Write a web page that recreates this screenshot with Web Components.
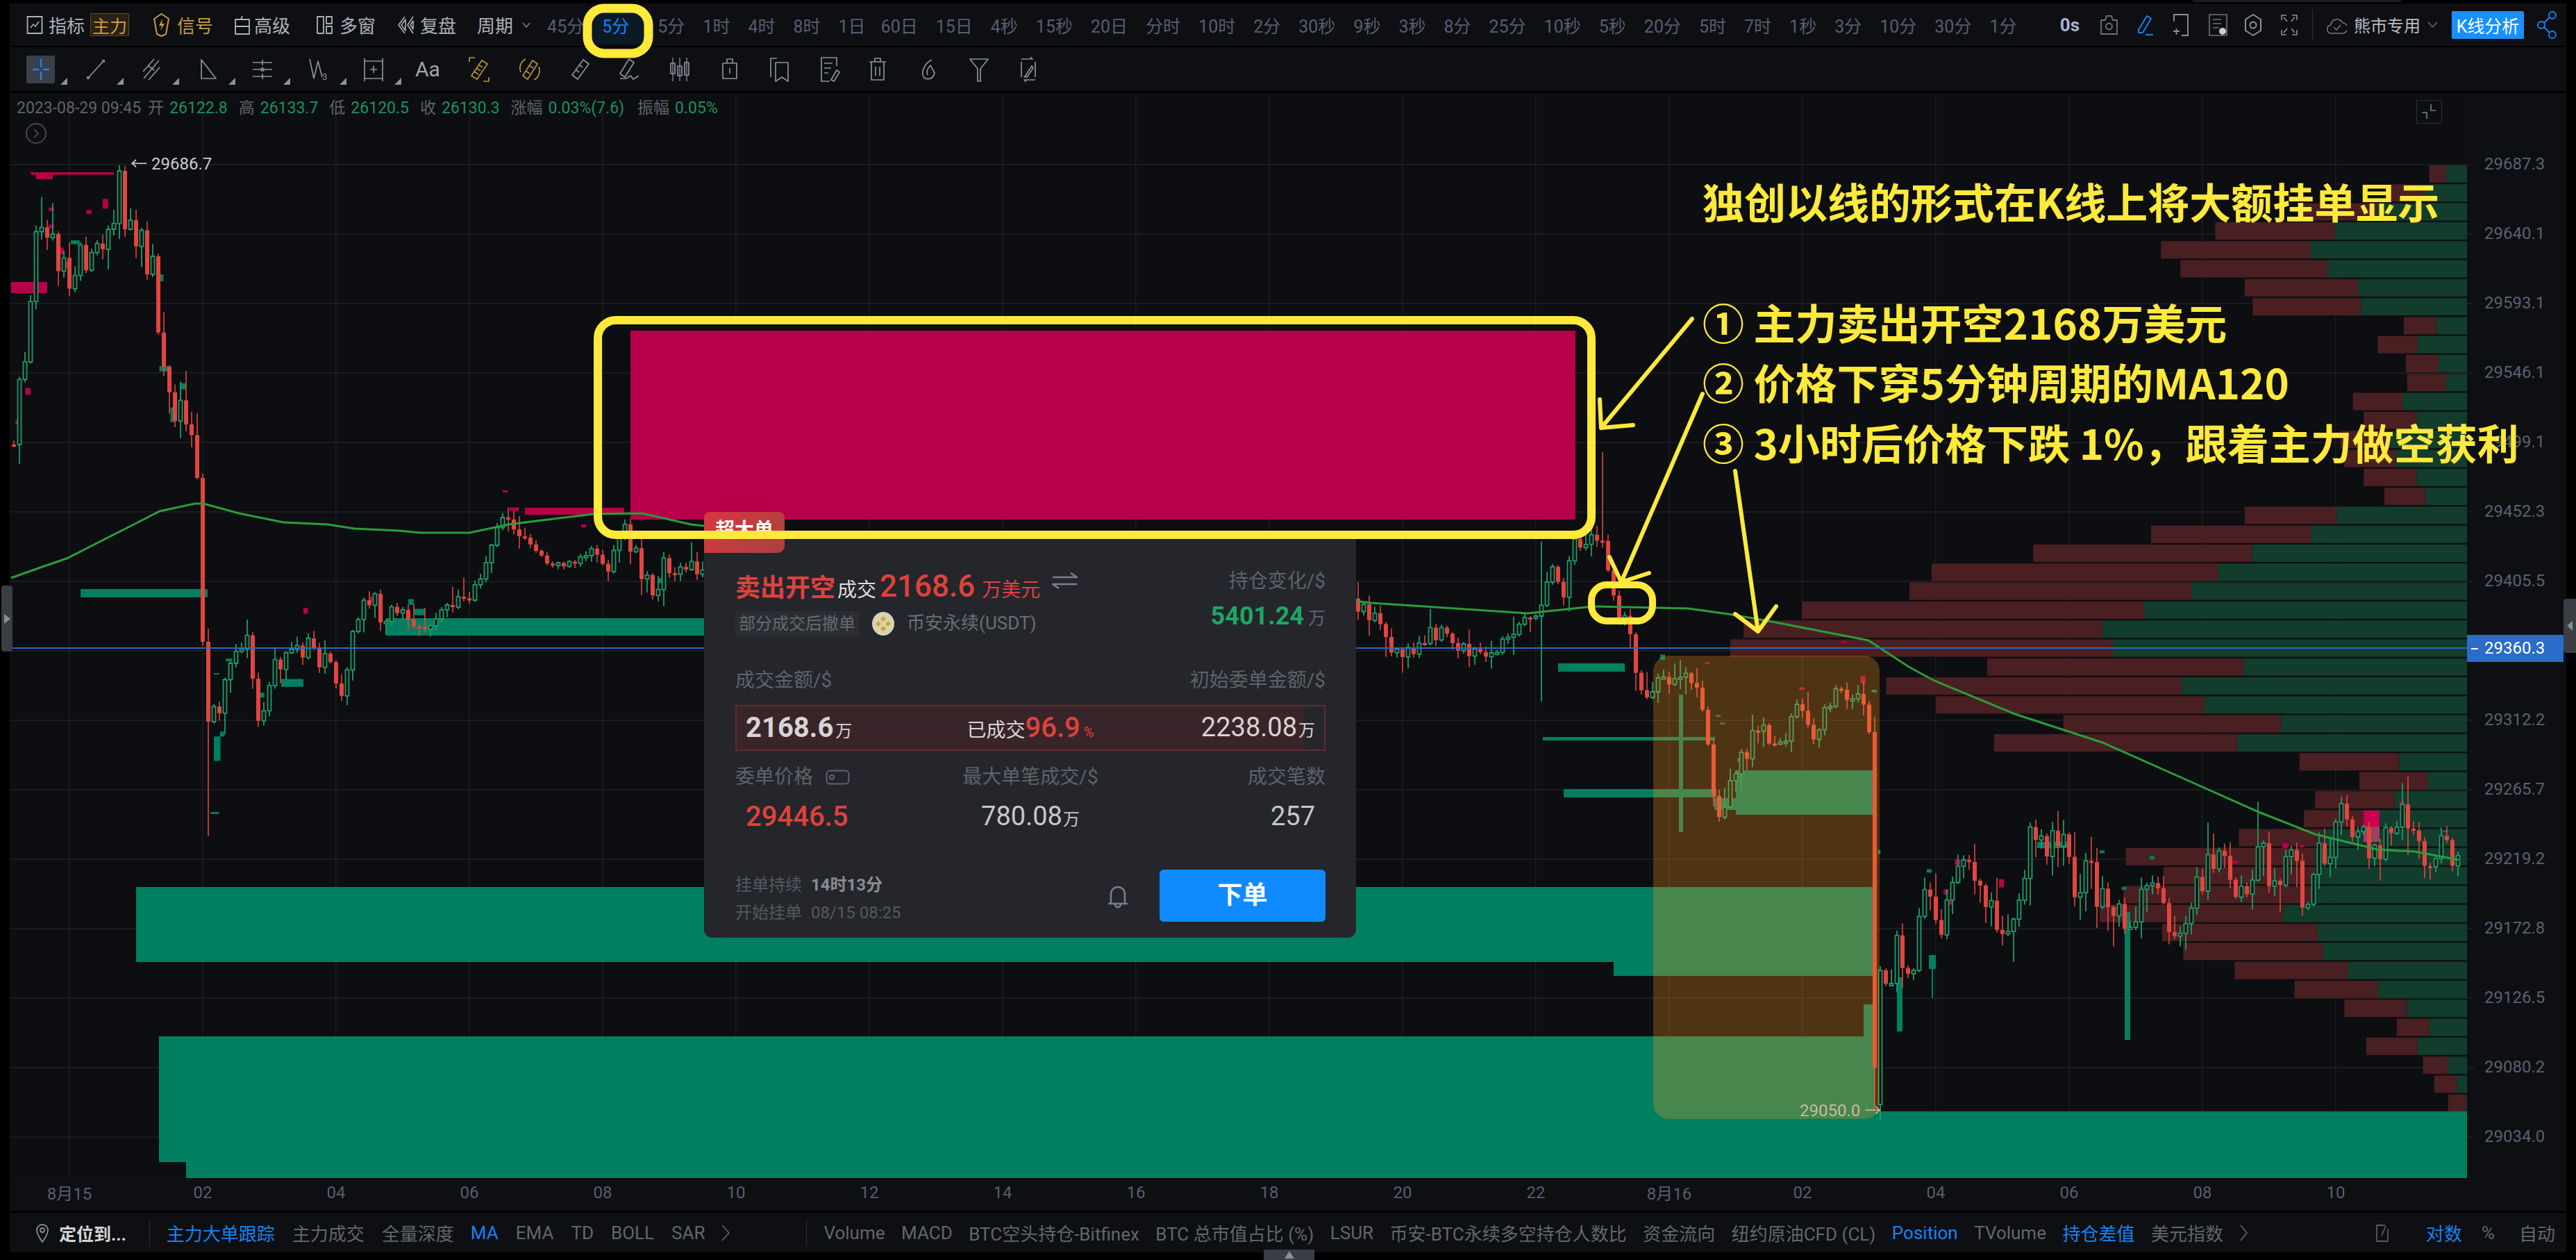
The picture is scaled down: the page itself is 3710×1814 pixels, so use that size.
<!DOCTYPE html>
<html lang="zh"><head><meta charset="utf-8"><title>K线</title>
<style>
html,body{margin:0;padding:0;background:#000;width:3710px;height:1814px;overflow:hidden}
body{position:relative;font-family:Roboto,"Noto Sans CJK SC",sans-serif}
</style></head><body>
<kline-app></kline-app>
<annotation-layer></annotation-layer>
<script>
const FONT='Roboto,"Noto Sans CJK SC",sans-serif';
function def(name,render){customElements.define(name,class extends HTMLElement{constructor(){super();this.attachShadow({mode:'open'}).innerHTML=render(this)}})}
function ico(w,h,vb,body,col,sw,extra){return `<svg width="${w}" height="${h}" viewBox="${vb}" fill="none" stroke="${col}" stroke-width="${sw||1.8}" stroke-linejoin="round" style="flex:none;${extra||''}">${body}</svg>`}

def('bar-item',()=>`<style>:host{display:inline-flex;align-items:center;white-space:nowrap;flex:none}</style><slot></slot>`);
def('period-item',(el)=>`<style>:host{display:inline-flex;align-items:center;justify-content:center;height:54px;padding:0 13px;font-size:25px;color:#565d72;white-space:nowrap;flex:none;box-sizing:border-box}
:host([active]){color:#1583f3;background:#0c1a27;padding-right:21px;margin-right:7px;border-radius:4px}</style><slot></slot>`);

def('top-bar',()=>{
 const periods=['45分','5分*','5分','1时','4时','8时','1日','60日','15日','4秒','15秒','20日','分时','10时','2分','30秒','9秒','3秒','8分','25分','10秒','5秒','20分','5时','7时','1秒','3分','10分','30分','1分'];
 const G='#aeb2ba',Y='#c49b45';
 return `<style>:host{display:flex;align-items:center;height:61px;background:#0d0f12;padding:0 14px 0 24px;box-sizing:border-box;font-size:26px;color:${G}}
 .tag{width:56px;height:33px;box-sizing:border-box;border:1px solid #5e4826;background:#2a2116;color:#d49a3c;justify-content:center;font-size:25px}
 .r{margin-left:auto;display:flex;align-items:center}
 .btn{width:104px;height:40px;background:#1890ff;color:#fff;justify-content:center;border-radius:2px;font-size:25px}
 .div{width:1px;height:44px;background:#2c2f35;flex:none}
 </style>
 ${ico(24,30,'0 0 24 30','<rect x="1.5" y="3" width="21" height="24"/><path d="M6 19l4-5 3 3 5-7" stroke-width="1.5"/>',G)}
 <bar-item style="margin-left:8px">指标</bar-item>
 <bar-item class="tag" style="margin-left:8px">主力</bar-item>
 ${ico(25,36,'0 0 25 36','<path d="M12.5 2 23 9 19 31 12.5 34 6 31 2 9Z"/><path d="M14 9 9 19h4l-2 7 6-10h-4z" fill="'+Y+'" stroke="none"/>',Y,2,'margin-left:34px')}
 <bar-item style="margin-left:10px;color:${Y}">信号</bar-item>
 ${ico(26,30,'0 0 26 30','<path d="M3 7H23V28H3Z M3 17H23 M11 7 13 2"/>',G,1.8,'margin-left:29px')}
 <bar-item style="margin-left:4px">高级</bar-item>
 ${ico(23,28,'0 0 23 28','<rect x="1" y="2" width="9" height="24"/><rect x="14" y="2" width="8" height="10"/><rect x="14" y="16" width="8" height="10"/>',G,1.8,'margin-left:38px')}
 <bar-item style="margin-left:10px">多窗</bar-item>
 ${ico(26,30,'0 0 26 30','<path d="M12 3 3 15 12 27 M13 7 7 15 13 23 Z M24 3 16 15 24 27 M24 9 20 15 24 21Z"/>',G,1.6,'margin-left:30px')}
 <bar-item style="margin-left:8px">复盘</bar-item>
 <bar-item style="margin-left:30px">周期</bar-item>
 ${ico(12,8,'0 0 12 8','<path d="M1 1l5 6 5-6"/>','#7a7e86',1.6,'margin-left:13px;margin-right:11px')}
 ${periods.map((p,i)=>{const a=p.endsWith('*');return `<period-item ${a?'active':''} ${p==='1日'?'style="margin-right:-4px"':''}>${p.replace('*','')}</period-item>`}).join('')}
 <div class="r">
 <bar-item style="font-weight:700;color:#a7b6d6">0s</bar-item>
 ${ico(27,32,'0 0 27 32','<path d="M2 9H8L10 3H17L19 9H25V29H2Z"/><circle cx="13.5" cy="18" r="4.5"/>','#6e727a',1.8,'margin-left:29px')}
 ${ico(25,32,'0 0 25 32','<path d="M3 23 15 3l6 4L9 27H3Z M13 30H24" />','#1583f3',2,'margin-left:26px')}
 ${ico(25,34,'0 0 25 34','<path d="M3 12V2H23V32H14 M2 26H11 M6.500 22V31"/>','#8e9299',1.8,'margin-left:26px')}
 ${ico(27,34,'0 0 27 34','<rect x="1" y="2" width="25" height="30"/><circle cx="20" cy="26" r="5" fill="#cfcfcf" stroke="none"/><path d="M6 9H18M6 15H18M6 21H15" stroke-width="1.4"/>','#6e727a',1.6,'margin-left:28px')}
 ${ico(26,34,'0 0 26 34','<path d="M13 2 24 9V25L13 32 2 25V9Z"/><circle cx="13" cy="17" r="4.500"/>','#8e9299',2,'margin-left:24px')}
 ${ico(26,32,'0 0 26 32','<path d="M2 9V2H9M17 2H24V9M2 23V30H9M17 30H24V23M5 5l5 6M21 5l-5 6M5 27l5-6M21 27l-5-6" />','#8e9299',1.6,'margin-left:26px')}
 <div class="div" style="margin-left:20px"></div>
 ${ico(29,30,'0 0 29 30','<path d="M7 27a6 6 0 0 1-1-12A9 9 0 0 1 23 12a7 7 0 0 1-1 15Z"/><path d="M10 18l4 4 6-7"/>','#71757d',1.6,'margin-left:20px')}
 <bar-item style="margin-left:10px;font-size:24px;color:#b8bcc4">熊市专用</bar-item>
 ${ico(15,9,'0 0 15 9','<path d="M1 1l6.500 7L14 1"/>','#666a72',1.6,'margin-left:10px')}
 <bar-item class="btn" style="margin-left:20px">K线分析</bar-item>
 ${ico(28,40,'0 0 28 40','<circle cx="22" cy="6" r="5"/><circle cx="6" cy="20" r="5"/><circle cx="22" cy="34" r="5"/><path d="M18 9 10 17M10 23l8 8"/>','#1583f3',2,'margin-left:19px')}
 </div>`;
});

def('draw-toolbar',()=>{
 const g='#8d929b',Y='#b8923f';
 const P=(b,c)=>ico(32,38,'0 0 32 38',b,c||g,1.7);
 const icons=[
 ['<path d="M16 4V16M16 22V34M4 19H13M19 19H28" stroke="#1a86f0" stroke-width="2.4"/>',1,84,1],
 [P('<path d="M6 30 26 8"/><circle cx="5" cy="31" r="1.500"/><circle cx="27" cy="7" r="1.500"/>'),1,80],
 [P('<path d="M4 22 20 4M12 34 28 16M5 32 27 6M12 14l8 6"/>'),1,81],
 [P('<path d="M7 5V32H28Z"/>'),1,79],
 [P('<path d="M2 9H30M2 19H30M2 29H30M16 5V13M16 25V33" /><circle cx="16" cy="19" r="2"/>'),1,81],
 [P('<path d="M3 4 9 32 15 7 21 30"/><text x="21" y="34" font-size="13" stroke="none" fill="'+g+'" font-family="Roboto">3</text>'),1,79],
 [P('<rect x="3" y="7" width="26" height="25"/><path d="M11 19H21M16 14V24M3 3V7M29 3V7M3 32V36M29 32V36"/>'),1,76],
 ['<span style="font-size:30px;color:#a0a4ac;line-height:38px;font-family:Roboto">Aa</span>',0,76],
 [P('<path d="M2 8V2H10M30 30V36H22"/><path d="M20 6 28 11 13 33 5 28Z M15 12l6 4M12 17l6 4M9 22l6 4"/>',Y),0,73],
 [P('<path d="M20 6 27 11 13 33 6 28Z M15 13l6 4M10 21l6 4"/><path d="M10 4A15 15 0 0 0 3 23M22 34A15 15 0 0 0 29 15"/>',Y),0,72],
 [P('<path d="M21 5 29 11 13 33 5 27Z M16 13l4 3M11 20l4 3"/>'),0,71],
 [P('<path d="M16 4 23 9 10 30 3 25Z M3 32H12L18 28 22 33 30 28"/>'),0,73],
 [P('<path d="M6 2V36M16 2V36M26 2V36" stroke-width="1.300"/><rect x="3" y="10" width="6" height="15"/><rect x="13" y="14" width="6" height="14"/><rect x="23" y="9" width="6" height="18"/>'),0,72],
 [P('<path d="M12 10V4H20V10M6 10H26V32H6Z M16 17V25"/>'),0,72],
 [P('<path d="M3 30V3H12M10 9H28V36L19 30 10 36Z"/>'),0,72],
 [P('<path d="M26 14V2H4V36H16M8 10H20M8 17H18M8 24H14M18 34 26 20 30 23 22 36Z"/>'),0,69],
 [P('<path d="M4 8H28M12 8V3H20V8M7 8V34H25V8M13 15V28M19 15V28"/>'),0,72],
 [P('<path d="M22 5C12 10 8 20 9 27 10 35 24 35 26 24L20 13C15 18 14 24 16 27"/>'),0,74],
 [P('<path d="M3 4H29L18 18V36H14V18Z"/>'),0,71],
 [P('<path d="M6 8V30M26 8V30M6 4H22L19 1M26 34H10L13 37M21 14 12 28 10 30 14 30 23 17Z"/>'),0,72]];
 return `<style>:host{display:flex;align-items:center;height:63px;background:#0d0f12;padding:0 0 0 24px;box-sizing:border-box}
 .s{display:flex;align-items:center;position:relative;flex:none;height:38px}
 .t{position:absolute;bottom:-3px;width:0;height:0;border-left:10px solid transparent;border-bottom:10px solid #8d929b}
 .box{width:41px;height:40px;background:#3a3f4a;border-radius:2px;display:flex;align-items:center;justify-content:center}
 </style>`+icons.map(([b,t,w,box],i)=>`<div class="s" style="width:${w}px">${box?`<div class="box">${ico(32,38,'0 0 32 38',b,'#1a86f0')}</div>`:b}${t?`<i class="t" style="left:${i==0?49:46}px"></i>`:''}</div>`).join('');
});

def('price-axis',()=>{
 const L=['29687.3','29640.1','29593.1','29546.1','29499.1','29452.3','29405.5','*29360.3','29312.2','29265.7','29219.2','29172.8','29126.5','29080.2','29034.0'];
 return `<style>:host{display:block;width:143px;flex:none;background:#0d0f12;padding-top:52px;box-sizing:border-box;font-size:24px;color:#5b6072}
 .c{height:100px;display:flex;align-items:center;padding-left:25px;box-sizing:border-box}
 .cur{height:100px;display:flex;align-items:center}
 .b{width:139px;height:39px;margin-top:-6px;background:#2a6cc8;color:#fff;display:flex;align-items:center;box-sizing:border-box;padding-left:25px;position:relative}
 .b i{position:absolute;left:6px;top:19px;width:10px;height:2px;background:#fff}
 </style>`+L.map(x=>x[0]=='*'?`<div class="cur"><div class="b"><i></i>${x.slice(1)}</div></div>`:`<div class="c">${x}</div>`).join('');
});

def('order-popup',()=>{
 const lab='#5e626b';
 return `<style>:host{position:absolute;left:1000px;top:642px;width:939px;height:574px;background:#24262b;border-radius:0 0 12px 12px;padding:42px 44px 0 45px;box-sizing:border-box;color:${lab};font-size:28px;line-height:1.2;white-space:nowrap}
 .flag{position:absolute;left:0;top:-39px;width:116px;height:59px;border-radius:8px 8px 10px 0;background:linear-gradient(135deg,#d9363f,#a8423f);color:#fff;font-weight:700;font-size:28px;text-align:center;line-height:54px}
 .h{display:flex;justify-content:space-between}
 .row{display:flex;align-items:baseline;height:44px}
 .red{color:#e0413d}
 .badge{display:inline-flex;align-items:center;justify-content:center;width:178px;height:36px;background:#2b2d33;font-size:24px;color:#666a72}
 .sub{display:flex;align-items:center;height:36px;margin-top:18px;font-size:26px;color:#6a6e76}
 .rt{text-align:right}
 .between{display:flex;justify-content:space-between;align-items:center;height:34px;margin-top:47px}
 .bar{margin-top:18px;height:66px;border:2px solid #652a2e;box-sizing:border-box;background:linear-gradient(to right,#38252a 96.7%,transparent 96.7%);display:grid;grid-template-columns:1fr 1fr 1fr;align-items:center;padding:0 13px;color:#d8d4d4}
 .g3{display:grid;grid-template-columns:1fr 1.05fr 1fr;height:34px;align-items:center;margin-top:21px;text-align:center}
 .v3{display:grid;grid-template-columns:1fr 1.05fr 1fr;height:44px;align-items:center;margin-top:16px;text-align:center;padding:0 15px;color:#c8c8c8;font-size:38px}
 .w{font-size:24px}
 .foot{display:flex;align-items:flex-start;margin-top:56px}
 .btn{margin-left:44px;width:239px;height:75px;background:#0f8bff;border-radius:6px;color:#fff;font-weight:700;font-size:36px;display:flex;align-items:center;justify-content:center}
 .fl{flex:1;font-size:24px;color:#55585f;padding-top:2px}
 .fl div{height:40px;display:flex;align-items:center;gap:13px}
 </style>
 <div class="flag">超大单</div>
 <div class="h">
  <div>
   <div class="row"><span class="red" style="font-size:36px;font-weight:700">卖出开空</span><span style="color:#ddd;margin-left:3px">成交</span><span class="red" style="font-size:44px;font-weight:500;margin-left:5px">2168.6</span><span class="red" style="margin-left:10px">万美元</span>
   <span style="margin-left:17px;align-self:center">${ico(37,26,'0 0 37 26','<path d="M1 8H36L27 2M36 18H1L10 24"/>','#7b7f87',2.5)}</span></div>
   <div class="sub"><span class="badge">部分成交后撤单</span>
    <svg width="32" height="34" viewBox="0 0 32 34" style="margin:0 18px 0 19px;flex:none"><ellipse cx="16" cy="17" rx="16" ry="17" fill="#d8d2b8"/><path d="M16 6l4 4-4 4-4-4zM9 13l4 4-4 4-4-4zM23 13l4 4-4 4-4-4zM16 20l4 4-4 4-4-4z" fill="#d9a520"/></svg>
    <span>币安永续(USDT)</span></div>
  </div>
  <div class="rt">
   <div style="height:30px;line-height:30px;margin-top:4px">持仓变化/$</div>
   <div style="margin-top:16px;height:38px;line-height:38px"><span style="color:#1fa567;font-size:36px;font-weight:700">5401.24</span><span style="font-size:25px;margin-left:6px">万</span></div>
  </div>
 </div>
 <div class="between"><span>成交金额/$</span><span>初始委单金额/$</span></div>
 <div class="bar"><div style="font-size:40px;font-weight:700">2168.6<span class="w" style="font-weight:400;margin-left:3px">万</span></div>
  <div style="text-align:center;font-size:28px">已成交<span class="red" style="font-size:40px;font-weight:500">96.9</span><span class="red" style="font-size:20px;margin-left:5px">%</span></div>
  <div style="text-align:right;font-size:38px">2238.08<span class="w" style="margin-left:2px">万</span></div></div>
 <div class="g3"><span style="text-align:left;display:flex;align-items:center">委单价格${ico(35,22,'0 0 35 22','<rect x="1.500" y="1.500" width="32" height="19" rx="5"/><circle cx="9" cy="11" r="3"/>','#5e626b',2,'margin-left:18px')}</span><span>最大单笔成交/$</span><span style="text-align:right">成交笔数</span></div>
 <div class="v3"><span class="red" style="text-align:left;font-size:40px;font-weight:500">29446.5</span><span>780.08<span class="w" style="margin-left:1px">万</span></span><span style="text-align:right">257</span></div>
 <div class="foot">
  <div class="fl"><div>挂单持续<b style="color:#8a8d94;font-weight:700">14时13分</b></div><div>开始挂单<span>08/15 08:25</span></div></div>
  ${ico(32,36,'0 0 32 36','<path d="M2 28H30M6 28V14A10 10 0 0 1 26 14V28M12 28C12 35 20 35 20 28"/>','#7b7f87',2.6,'margin-top:21px')}
  <div class="btn">下单</div>
 </div>`;
});

def('chart-pane',()=>{
 const W=[[20,640],[38,506],[48,352],[76,337],[102,422],[115,352],[134,365],[156,330],[172,246],[180,330],[198,358],[220,369],[230,506],[245,569],[274,611],[284,688],[292,924],[300,1039],[312,1032],[332,955],[357,913],[373,1046],[389,983],[415,934],[469,941],[488,1011],[510,899],[529,871],[580,878],[612,906],[644,871],[676,864],[701,808],[724,745],[752,766],[791,815],[829,811],[855,787],[874,829],[899,752],[938,864],[957,800],[988,820],[1200,800],[1600,820],[1964,870],[2011,935],[2082,911],[2141,946],[2212,887],[2236,816],[2248,873],[2267,776],[2296,771],[2310,780],[2325,863],[2344,914],[2372,1004],[2426,965],[2453,1024],[2475,1179],[2502,1109],[2534,1049],[2565,1069],[2588,1014],[2610,1069],[2646,987],[2678,1000],[2692,1054],[2700,1537],[2708,1397],[2736,1373],[2750,1407],[2777,1278],[2790,1333],[2830,1233],[2866,1293],[2893,1343],[2920,1223],[2965,1218],[2992,1288],[3001,1233],[3037,1308],[3073,1338],[3091,1273],[3127,1348],[3172,1283],[3199,1218],[3235,1293],[3249,1213],[3276,1268],[3307,1233],[3321,1318],[3334,1248],[3366,1179],[3397,1198],[3415,1243],[3437,1189],[3469,1193],[3500,1248],[3523,1208],[3541,1233]];
 const yAt=x=>{for(let i=1;i<W.length;i++){if(x<=W[i][0]){const[a,b]=W[i-1],[c,d]=W[i];return b+(d-b)*(x-a)/(c-a)}}return W[W.length-1][1]};
 let s=12345;const R=()=>{s=(s*16807)%2147483647;return s/2147483647};
 const amp=x=>x<300?70:x<560?46:x<760?22:x<860?8:x<1000?46:x<2700?34:70;
 const BG='#0c0e11',GR='#1a1c20';
 let o='';
 for(let i=0;i<15;i++){o+=`<rect x="14" y="${236+100*i}" width="3549" height="2" fill="${GR}"/>`}
 for(let x=99;x<3553;x+=192){o+=`<rect x="${x}" y="134" width="1.500" height="1562" fill="${GR}"/>`}
 const z8=x=>x/1.038+2200,z10=x=>x/1.112+2300;
 const A=[[1348,1373],[1290,1340],[1160,1270],[1028,1207],[947,1171],[976,1196],[1072,1242],[1084,1246],[1310,1358],[1271,1331],[1313,1362],[1315,1373],[1234,1308],[1250,1330],[1215,1290],[1221,1298],[1250,1329],[1281,1342],[1072,1210],[932,1171],[756,1083],[604,1032],[571,993],[410,922],[323,859],[303,875],[687,1070],[536,978]].map(r=>r.map(z8));
 const B=[[543,973],[747,1096],[636,1025],[1125,1285],[1221,1330],[1150,1277],[1132,1240],[1028,1160],[847,1150],[907,1150],[843,1150],[805,1099],[905,1154],[939,1163],[1021,1203],[1117,1251],[1197,1297],[1281,1333],[1232,1314],[1323,1363],[1341,1377],[1363,1392]].map(r=>r.map(z10));
 A.concat(B).forEach((r,i)=>{const y=(238+27.3*i).toFixed(1);o+=`<rect x="${r[0].toFixed(1)}" y="${y}" width="${(r[1]-r[0]).toFixed(1)}" height="25" fill="#4a1f22"/><rect x="${r[1].toFixed(1)}" y="${y}" width="${(3553-r[1]).toFixed(1)}" height="25" fill="#123c2c"/>`});
 const T='#008060',P='#b8004a';
 const rect=(x,y,w,h,c)=>`<rect x="${x}" y="${y}" width="${w}" height="${h}" fill="${c}"/>`;
 o+=rect(908,476,1361,272,P)+rect(756,731,143,10,P)+rect(44,248,120,3.500,P)+rect(52,251,24,7,P)+rect(16,406,52,16,P);
 o+=rect(116,848,183,12,T)+rect(556,890,470,25,T);
 o+=rect(196,1277,2504,108,T)+rect(2324,1385,376,20,T);
 o+=rect(229,1492,2471,181,T)+rect(268,1673,2432,23,T)+rect(2684,1446,16,46,T)+rect(2700,1600,853,96,T);
 o+=rect(2500,1109,200,64,T)+rect(2469,1149,31,17,T)+rect(2222,1061,248,5,T)+rect(2252,1136,220,12,T)+rect(2418,1000,6,198,T);
 o+=rect(2244,955,96,12,T)+rect(3060,1313,8,184,T)+rect(2732,1407,8,78,T)+rect(2778,1375,10,20,T)+rect(2782,1395,2,42,T)+rect(2934,1212,45,9,T);
 o+=rect(3404,1167,23,23,'#c8004f')+rect(3404,1190,23,22,'#a04060');
 const z9p=[[110,255,12,7],[110,290,12,7],[132,337,12,14],[145,366,12,13],[195,260,12,8],[232,237,12,20],[57,625,12,14],[35,690,8,10],[685,1076,10,12],[835,1053,12,10],[1135,835,12,4],[1150,870,22,7],[1312,905,12,6]];
 const z9t=[[357,392,12,14],[408,615,12,13],[360,580,20,11],[385,665,10,30],[483,1340,15,50],[585,1250,12,10],[635,1222,50,16],[935,1078,24,13],[922,1058,12,12],[1488,1015,10,10],[160,322,20,8],[510,1180,14,6],[483,1210,12,3],[475,1495,20,4],[497,1330,10,10]];
 z9p.forEach(a=>o+=rect(a[0]/1.568,a[1]/1.425+120,a[2]/1.568,a[3]/1.425,P));
 z9t.forEach(a=>o+=rect(a[0]/1.568,a[1]/1.425+120,a[2]/1.568,a[3]/1.425,T));
 const z10p=[[392,47,8,5],[173,107,7,5],[324,180,8,7],[422,148,8,20],[573,678,9,16],[644,735,8,24],[555,765,8,14],[560,795,8,14],[1098,630,9,15],[1125,637,8,6],[1018,682,8,8],[1285,510,8,14]];
 const z10t=[[528,706,8,10],[805,652,8,8],[885,668,8,10],[840,758,8,8],[190,260,8,5],[440,187,8,8],[197,282,8,5],[101,85,8,15],[225,385,8,10],[450,650,4,12],[1355,595,8,4]];
 z10p.forEach(a=>o+=rect(z10(a[0]),a[1]/2.01+900,a[2]/1.112,a[3]/2.01,P));
 z10t.forEach(a=>o+=rect(z10(a[0]),a[1]/2.01+900,a[2]/1.112,a[3]/2.01,T));
 const over={300:{lo:1204},292:{lo:930},2700:{lo:1600},2708:{o:1590,c:1397},3252:{hi:1154},2308:{hi:651},2220:{hi:780,lo:1010},2420:{hi:950}};
 let up='',dn='',prev=yAt(20);
 for(let x=20;x<=3541;x+=8){
  const key=W.some(w=>Math.abs(w[0]-x)<4);
  let c=yAt(x)+(key?0:(R()-.5)*amp(x));
  let op=prev;const ov=over[x]||{};
  if(ov.o)op=ov.o;if(ov.c)c=ov.c;
  const wk=(x<300||x>2700)?48:(x>760&&x<860?10:30);
  const bigR=R()*R()*wk,bigL=R()*R()*wk;
  const t=Math.min(op,c),b=Math.max(op,c);
  const hi=ov.hi||t-bigR-2,lo=ov.lo||b+bigL+2;
  const h=Math.max(b-t,3);
  if(c<op){up+=`M${x} ${hi.toFixed(1)}V${t.toFixed(1)}M${x} ${(t+h).toFixed(1)}V${lo.toFixed(1)}M${x-2.500} ${t.toFixed(1)}h5v${h.toFixed(1)}h-5z`}
  else{dn+=`<rect x="${x-3}" y="${t.toFixed(1)}" width="6" height="${h.toFixed(1)}"/><rect x="${x-.8}" y="${hi.toFixed(1)}" width="1.6" height="${(lo-hi).toFixed(1)}"/>`}
  prev=c;
 }
 o+=`<g fill="#e2453f">${dn}</g><path d="${up}" fill="${BG}" stroke="#1d9d6b" stroke-width="1.800"/>`;
 const M=[[16,832],[64,815],[96,804],[179,762],[230,736],[281,725],[293,725],[344,739],[408,752],[472,755],[510,761],[574,764],[606,767],[676,767],[733,755],[797,747],[855,740],[925,739],[995,755],[1400,800],[1975,868],[2200,883],[2296,873],[2431,876],[2489,884],[2547,894],[2691,922],[2749,960],[2786,980],[2902,1028],[3028,1069],[3145,1121],[3253,1169],[3334,1201],[3424,1223],[3478,1226],[3541,1238]];
 o+=`<polyline points="${M.map(p=>p.join(',')).join(' ')}" fill="none" stroke="#2a9d3c" stroke-width="3"/>`;
 o+=rect(14,932,3539,2,'#2a6cc0');
 o+=`<rect x="2381" y="944" width="326" height="667" rx="22" fill="rgb(255,150,30)" fill-opacity=".28"/>`;
 return `<style>:host{display:flex;height:1562px;background:${BG};position:relative;color:#aaa}
 .plot{flex:1;position:relative;min-width:0}
 svg.c{position:absolute;left:0;top:0;display:block;overflow:visible}
 .info{position:absolute;left:10px;top:8px;font-size:23px;line-height:27px;display:flex;white-space:nowrap;color:#5f636c}
 .info b{font-weight:400;color:#1a9160;margin-left:8px}
 .info span{margin-left:16px}
 .circ{position:absolute;left:23px;top:43px;width:30px;height:30px;box-sizing:border-box;border:2px solid #43464c;border-radius:50%;display:flex;align-items:center;justify-content:center}
 .ext{position:absolute;font-size:24px;white-space:nowrap;line-height:28px}
 .cor{position:absolute;left:3466px;top:10px;width:37px;height:34px;box-sizing:border-box;border:1.500px solid #2a2e48}
 </style>
 <div class="plot">
  <svg class="c" width="3539" height="1562" viewBox="14 134 3539 1562">${o}</svg>
  <div class="info"><i style="font-style:normal">2023-08-29 09:45</i><span style="margin-left:10px">开<b>26122.8</b></span><span>高<b>26133.7</b></span><span>低<b>26120.5</b></span><span>收<b>26130.3</b></span><span>涨幅<b>0.03%(7.6)</b></span><span style="margin-left:19px">振幅<b>0.05%</b></span></div>
  <div class="circ">${ico(10,16,'0 0 10 16','<path d="M2 2l6 6-6 6"/>','#43464c',2)}</div>
  <div class="ext" style="left:174px;top:88px;color:#c8ccd0">← 29686.7</div>
  <div class="ext" style="left:2578px;top:1451px;color:#c9bb9d">29050.0 →</div>
  <div class="cor">${ico(34,31,'0 0 34 31','<path d="M20 5V14H27M7 17H14V26" />','#7a7e8a',1.6)}</div>
  <order-popup></order-popup>
 </div>
 <price-axis></price-axis>`;
});

def('time-axis',()=>{
 const L=['8月15','02','04','06','08','10','12','14','16','18','20','22','8月16','02','04','06','08','10'];
 return `<style>:host{display:flex;height:47px;background:#0d0f12;font-size:24px;color:#565d72;align-items:center;padding-bottom:6px;box-sizing:border-box}
 div{width:192px;flex:none;text-align:center;white-space:nowrap}</style>`+L.map((t,i)=>`<div style="${i==0?'width:172px;margin-right:10px':''}">${t}</div>`).join('');
});

def('bottom-bar',()=>{
 const B='#1583f3',G='#62666e';
 const it=(t,c,m)=>`<bar-item style="margin-left:${m==null?25:m}px;${c?'color:'+c:''}">${t}</bar-item>`;
 const r=(t,c)=>it(t,c,23.5);
 return `<style>:host{display:flex;align-items:center;height:57px;background:#0d0f12;padding:0 16px 0 37px;box-sizing:border-box;font-size:26px;color:${G}}
 .d{width:1px;height:38px;background:#2c2f35;flex:none}.r{margin-left:auto;display:flex;align-items:center}</style>
 ${ico(20,28,'0 0 20 28','<path d="M10 27C5 20 2 15 2 10a8 8 0 0 1 16 0c0 5-3 10-8 17Z"/><circle cx="10" cy="10" r="3"/>','#8a8e95',1.8)}
 ${it('定位到...','#d5d5d5',14).replace('margin-left','font-weight:700;font-size:25px;margin-left')}
 <div class="d" style="margin-left:33px"></div>
 ${it('主力大单跟踪',B,24)}${it('主力成交')}${it('全量深度')}${it('MA',B,24)}${it('EMA')}${it('TD')}${it('BOLL')}${it('SAR')}
 ${ico(14,28,'0 0 14 28','<path d="M2 3l10 11L2 25"/>',G,1.6,'margin-left:23px')}
 <div class="d" style="margin-left:109px"></div>
 ${it('Volume',null,24)}${r('MACD')}${r('BTC空头持仓-Bitfinex')}${r('BTC 总市值占比 (%)')}${r('LSUR')}${r('币安-BTC永续多空持仓人数比')}${r('资金流向')}${r('纽约原油CFD (CL)')}${r('Position',B)}${r('TVolume')}${r('持仓差值',B)}${r('美元指数')}
 ${ico(12,28,'0 0 12 28','<path d="M1 3l9 11L1 25"/>',G,1.6,'margin-left:24px')}
 <div class="r">
 ${ico(19,28,'0 0 19 28','<path d="M14 3H2V26H18V8M9 18l6-14"/>','#565a61',1.8)}
 ${it('对数',B,54)}${it('%',null,28)}${it('自动',null,35)}
 </div>`;
});

def('kline-app',()=>`<style>:host{display:flex;flex-direction:column;box-sizing:border-box;width:3710px;height:1814px;padding:5px 14px 11px 14px;background:#000;font-family:${FONT}}
 top-bar{margin-bottom:2px} draw-toolbar{margin-bottom:3px} time-axis{margin-bottom:3px}</style>
 <top-bar></top-bar><draw-toolbar></draw-toolbar><chart-pane></chart-pane><time-axis></time-axis><bottom-bar></bottom-bar>`);

def('annotation-layer',()=>{
 const Y='#ffe93b';
 return `<style>:host{position:absolute;left:0;top:0;width:3710px;height:1814px;pointer-events:none;font-family:"Noto Sans CJK SC",sans-serif}
 svg{position:absolute;left:0;top:0}
 .t{position:absolute;left:2452px;color:${Y};font-weight:700;font-size:60px;line-height:80px;white-space:nowrap}
 .h{position:absolute;background:#3a3d44;display:flex;align-items:center;justify-content:center}
 </style>
 <svg width="3710" height="1814" viewBox="0 0 3710 1814" fill="none" stroke="${Y}" stroke-linecap="round" stroke-linejoin="round">
  <rect x="846" y="12" width="88" height="65" rx="24" stroke-width="13"/>
  <rect x="861" y="461" width="1431" height="309" rx="26" stroke-width="12"/>
  <rect x="2292" y="842" width="88" height="52" rx="22" stroke-width="10"/>
  <g stroke-width="6"><path d="M2437 459 2306 616M2304 575 2306 616 2352 612"/><path d="M2452 567 2335 838M2318 802 2335 838 2375 825"/><path d="M2499 678 2532 909M2499 884 2532 909 2558 873"/></g>
 </svg>
 <div class="t" style="top:249px">独创以线的形式在K线上将大额挂单显示</div>
 <div class="t" style="top:423px">① 主力卖出开空2168万美元</div>
 <div class="t" style="top:509px">② 价格下穿5分钟周期的MA120</div>
 <div class="t" style="top:596px">③ 3小时后价格下跌 1%，跟着主力做空获利</div>
 <div class="h" style="left:2px;top:843px;width:16px;height:95px;border-radius:4px"><i style="border-left:9px solid #8a8e95;border-top:7px solid transparent;border-bottom:7px solid transparent"></i></div>
 <div class="h" style="left:3692px;top:862px;width:18px;height:78px;border-radius:4px 0 0 4px"><i style="border-right:8px solid #8a8e95;border-top:7px solid transparent;border-bottom:7px solid transparent"></i></div>
 <div class="h" style="left:1820px;top:1799px;width:73px;height:15px"><i style="border-bottom:11px solid #8a8e95;border-left:7px solid transparent;border-right:7px solid transparent"></i></div>
 <div class="h" style="left:3158px;top:0;width:300px;height:3px;background:#1a1e20"></div>`;
});
</script>
</body></html>
